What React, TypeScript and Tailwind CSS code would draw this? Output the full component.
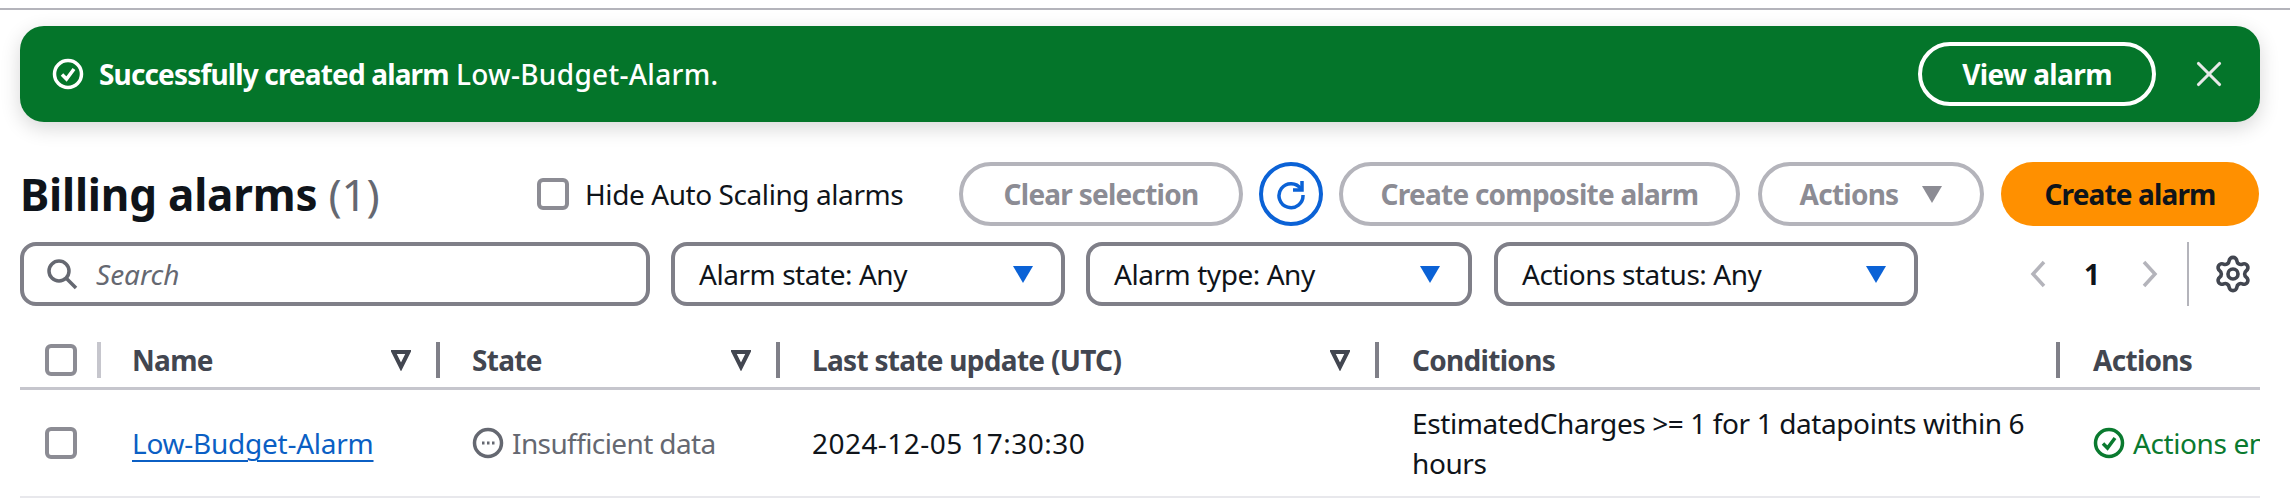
import { Settings, X } from 'lucide-react';

const FONT = 'font-["Noto_Sans",sans-serif]';

function CheckCircle({ className }: { className?: string }) {
  return (
    <svg viewBox="0 0 32 32" fill="none" stroke="currentColor" className={className}>
      <circle cx="16" cy="16" r="13.5" strokeWidth="3.5" />
      <path d="M10 16.5l4.5 4.5L22 11" strokeWidth="3.5" />
    </svg>
  );
}

function Checkbox() {
  return <span className="block w-8 h-8 shrink-0 rounded-[6px] border-[4px] border-[#8c8c94] bg-white" />;
}

function Dropdown({ label, width }: { label: string; width: string }) {
  return (
    <button className={`${width} h-16 shrink-0 flex items-center justify-between pl-6 pr-7 rounded-2xl border-[4px] border-[#7f7f88] bg-white text-[28px] tracking-[-0.45px] text-[#0f141a]`}>
      <span>{label}</span>
      <svg viewBox="0 0 20 17" className="w-5 h-[17px] fill-[#0b62d6]">
        <path d="M0 0h20L10 17z" />
      </svg>
    </button>
  );
}

function OutlineButton({ children, width }: { children: React.ReactNode; width: string }) {
  return (
    <button className={`${width} h-16 shrink-0 flex items-center justify-center gap-6 rounded-[32px] border-[4px] border-[#b4b4bb] text-[28px] tracking-[-0.75px] font-bold text-[#8c8c94]`}>
      {children}
    </button>
  );
}

function HeaderCell({ label, width, filter = true, divider = true, inset = 'pl-8' }: { label: string; width: string; filter?: boolean; divider?: boolean; inset?: string }) {
  return (
    <div className={`${width} ${inset} shrink-0 h-9 flex items-center justify-between text-[28px] tracking-[-0.7px] font-bold text-[#424650]`}>
      <span>{label}</span>
      <span className="flex items-center">
        {filter && (
          <svg viewBox="0 0 20 22" fill="none" stroke="#424650" strokeWidth="4" className="w-5 h-[22px] mr-[25px]">
            <path d="M2.5 3h15L10 18z" />
          </svg>
        )}
        {divider && <span className="block w-1 h-9 bg-[#7f7f88]" />}
      </span>
    </div>
  );
}

export default function App() {
  return (
    <div className={`${FONT} w-[2290px] h-[498px] overflow-hidden bg-white`}>
      <div className="h-[10px] border-b-[2px] border-[#b4b4bb]" />
      <div className="px-5 w-[2280px]">
        {/* Flash */}
        <div className="mt-4 h-24 w-[2240px] flex items-center justify-between pl-[32px] pr-[30px] rounded-[24px] bg-[#04752a] text-white text-[28px] shadow-[0_6px_20px_rgba(0,0,0,0.16)]">
          <div className="flex items-center gap-[15px]">
            <CheckCircle className="w-8 h-8" />
            <span>
              <b className="tracking-[-0.85px]">Successfully created alarm</b>{' '}
              <span className="font-medium tracking-[0.3px]">Low-Budget-Alarm.</span>
            </span>
          </div>
          <div className="flex items-center gap-8">
            <button className="w-[238px] h-16 rounded-[32px] border-[4px] border-white font-bold tracking-[-0.6px]">View alarm</button>
            <X size={42} strokeWidth={1.8} className="text-[#e8e8e8]" />
          </div>
        </div>

        {/* Title + actions */}
        <div className="mt-10 h-16 w-[2240px] flex items-center">
          <h1 className="w-[517px] text-[44px] font-bold text-[#0f141a] leading-none tracking-[-0.2px]">
            Billing alarms <span className="font-normal text-[#656871]">(1)</span>
          </h1>
          <label className="flex items-center gap-[16px] text-[28px] tracking-[-0.42px] text-[#0f141a] w-[422px]">
            <Checkbox />
            Hide Auto Scaling alarms
          </label>
          <OutlineButton width="w-[284px]">Clear selection</OutlineButton>
          <button className="ml-4 w-16 h-16 shrink-0 flex items-center justify-center rounded-full border-[4px] border-[#0b62d6]">
            <svg viewBox="0 0 32 32" fill="none" stroke="#0b62d6" strokeWidth="3.5" className="w-8 h-8">
              <path d="M26 11A12 12 0 1 0 28 17" />
              <path d="M27 3v9h-9" />
            </svg>
          </button>
          <div className="ml-[16px]"><OutlineButton width="w-[401px]">Create composite alarm</OutlineButton></div>
          <div className="ml-[18px]">
            <OutlineButton width="w-[226px]">
              Actions
              <svg viewBox="0 0 20 17" className="w-5 h-[17px] fill-[#8c8c94]"><path d="M0 0h20L10 17z" /></svg>
            </OutlineButton>
          </div>
          <button className="ml-[17px] w-[258px] h-16 shrink-0 rounded-[32px] bg-[#ff9000] text-[28px] tracking-[-0.85px] font-bold text-[#0f141a]">Create alarm</button>
        </div>

        {/* Filters */}
        <div className="mt-4 h-16 w-[2240px] flex items-center">
          <div className="w-[630px] h-16 shrink-0 flex items-center gap-[18px] pl-[22px] rounded-2xl border-[4px] border-[#7f7f88]">
            <svg viewBox="0 0 32 32" fill="none" stroke="#656871" strokeWidth="3.5" className="w-8 h-8">
              <circle cx="13" cy="13" r="10" />
              <path d="M20 20l10 10" />
            </svg>
            <span className="italic text-[28px] text-[#656871]">Search</span>
          </div>
          <div className="ml-[21px]"><Dropdown label="Alarm state: Any" width="w-[394px]" /></div>
          <div className="ml-[21px]"><Dropdown label="Alarm type: Any" width="w-[386px]" /></div>
          <div className="ml-[22px]"><Dropdown label="Actions status: Any" width="w-[424px]" /></div>
          <div className="ml-[112px] flex items-center">
            <svg viewBox="0 0 16 28" fill="none" stroke="#b4b4bb" strokeWidth="3.5" className="w-4 h-7"><path d="M14 2L3 14l11 12" /></svg>
            <span className="ml-[38px] w-[20px] text-[28px] font-bold text-[#0f141a]">1</span>
            <svg viewBox="0 0 16 28" fill="none" stroke="#b4b4bb" strokeWidth="3.5" className="ml-[38px] w-4 h-7"><path d="M2 2l11 12L2 26" /></svg>
          </div>
          <span className="ml-[29px] block w-[2px] h-16 bg-[#b4b4bb]" />
          <Settings size={40} strokeWidth={2.2} className="ml-[24px] text-[#424650]" />
        </div>

        {/* Table */}
        <div className="mt-[36px] w-[2240px] overflow-hidden">
          <div className="h-[48px] flex border-b-[3px] border-[#c6c6cd]">
            <div className="w-[81px] shrink-0 h-9 flex items-center justify-between pl-[25px]">
              <Checkbox />
              <span className="block w-1 h-9 bg-[#c6c6cd]" />
            </div>
            <HeaderCell label="Name" width="w-[339px]" inset="pl-[31px]" />
            <HeaderCell label="State" width="w-[340px]" />
            <HeaderCell label="Last state update (UTC)" width="w-[599px]" />
            <HeaderCell label="Conditions" width="w-[681px]" filter={false} inset="pl-[33px]" />
            <HeaderCell label="Actions" width="w-[200px]" filter={false} divider={false} inset="pl-[33px]" />
          </div>
          <div className="h-[109px] flex items-center border-b-[3px] border-[#e8e8ec] text-[28px] text-[#0f141a]">
            <div className="w-[81px] shrink-0 pl-[25px]"><Checkbox /></div>
            <div className="w-[339px] shrink-0 pl-[31px]">
              <a className="text-[#0b5fc4] underline underline-offset-[6px] decoration-2 tracking-[-0.25px]">Low-Budget-Alarm</a>
            </div>
            <div className="w-[340px] shrink-0 pl-8 flex items-center gap-[8px] text-[#656871] tracking-[-0.6px]">
              <svg viewBox="0 0 32 32" fill="none" className="w-8 h-8 shrink-0">
                <circle cx="16" cy="16" r="13.5" stroke="#656871" strokeWidth="3.5" />
                <path d="M10 16h2.5M15 16h2.5M20 16h2.5" stroke="#656871" strokeWidth="3" />
              </svg>
              Insufficient data
            </div>
            <div className="w-[599px] shrink-0 pl-8 tracking-[0.45px]">2024-12-05 17:30:30</div>
            <div className="w-[681px] shrink-0 pl-[33px] pr-6 leading-10 tracking-[-0.4px]">EstimatedCharges &gt;= 1 for 1 datapoints within 6 hours</div>
            <div className="w-[200px] shrink-0 pl-[33px] flex items-center gap-[8px] text-[#0a7a2f] whitespace-nowrap tracking-[-0.4px]">
              <CheckCircle className="w-8 h-8 shrink-0" />
              Actions enabled
            </div>
          </div>
        </div>
      </div>
    </div>
  );
}
